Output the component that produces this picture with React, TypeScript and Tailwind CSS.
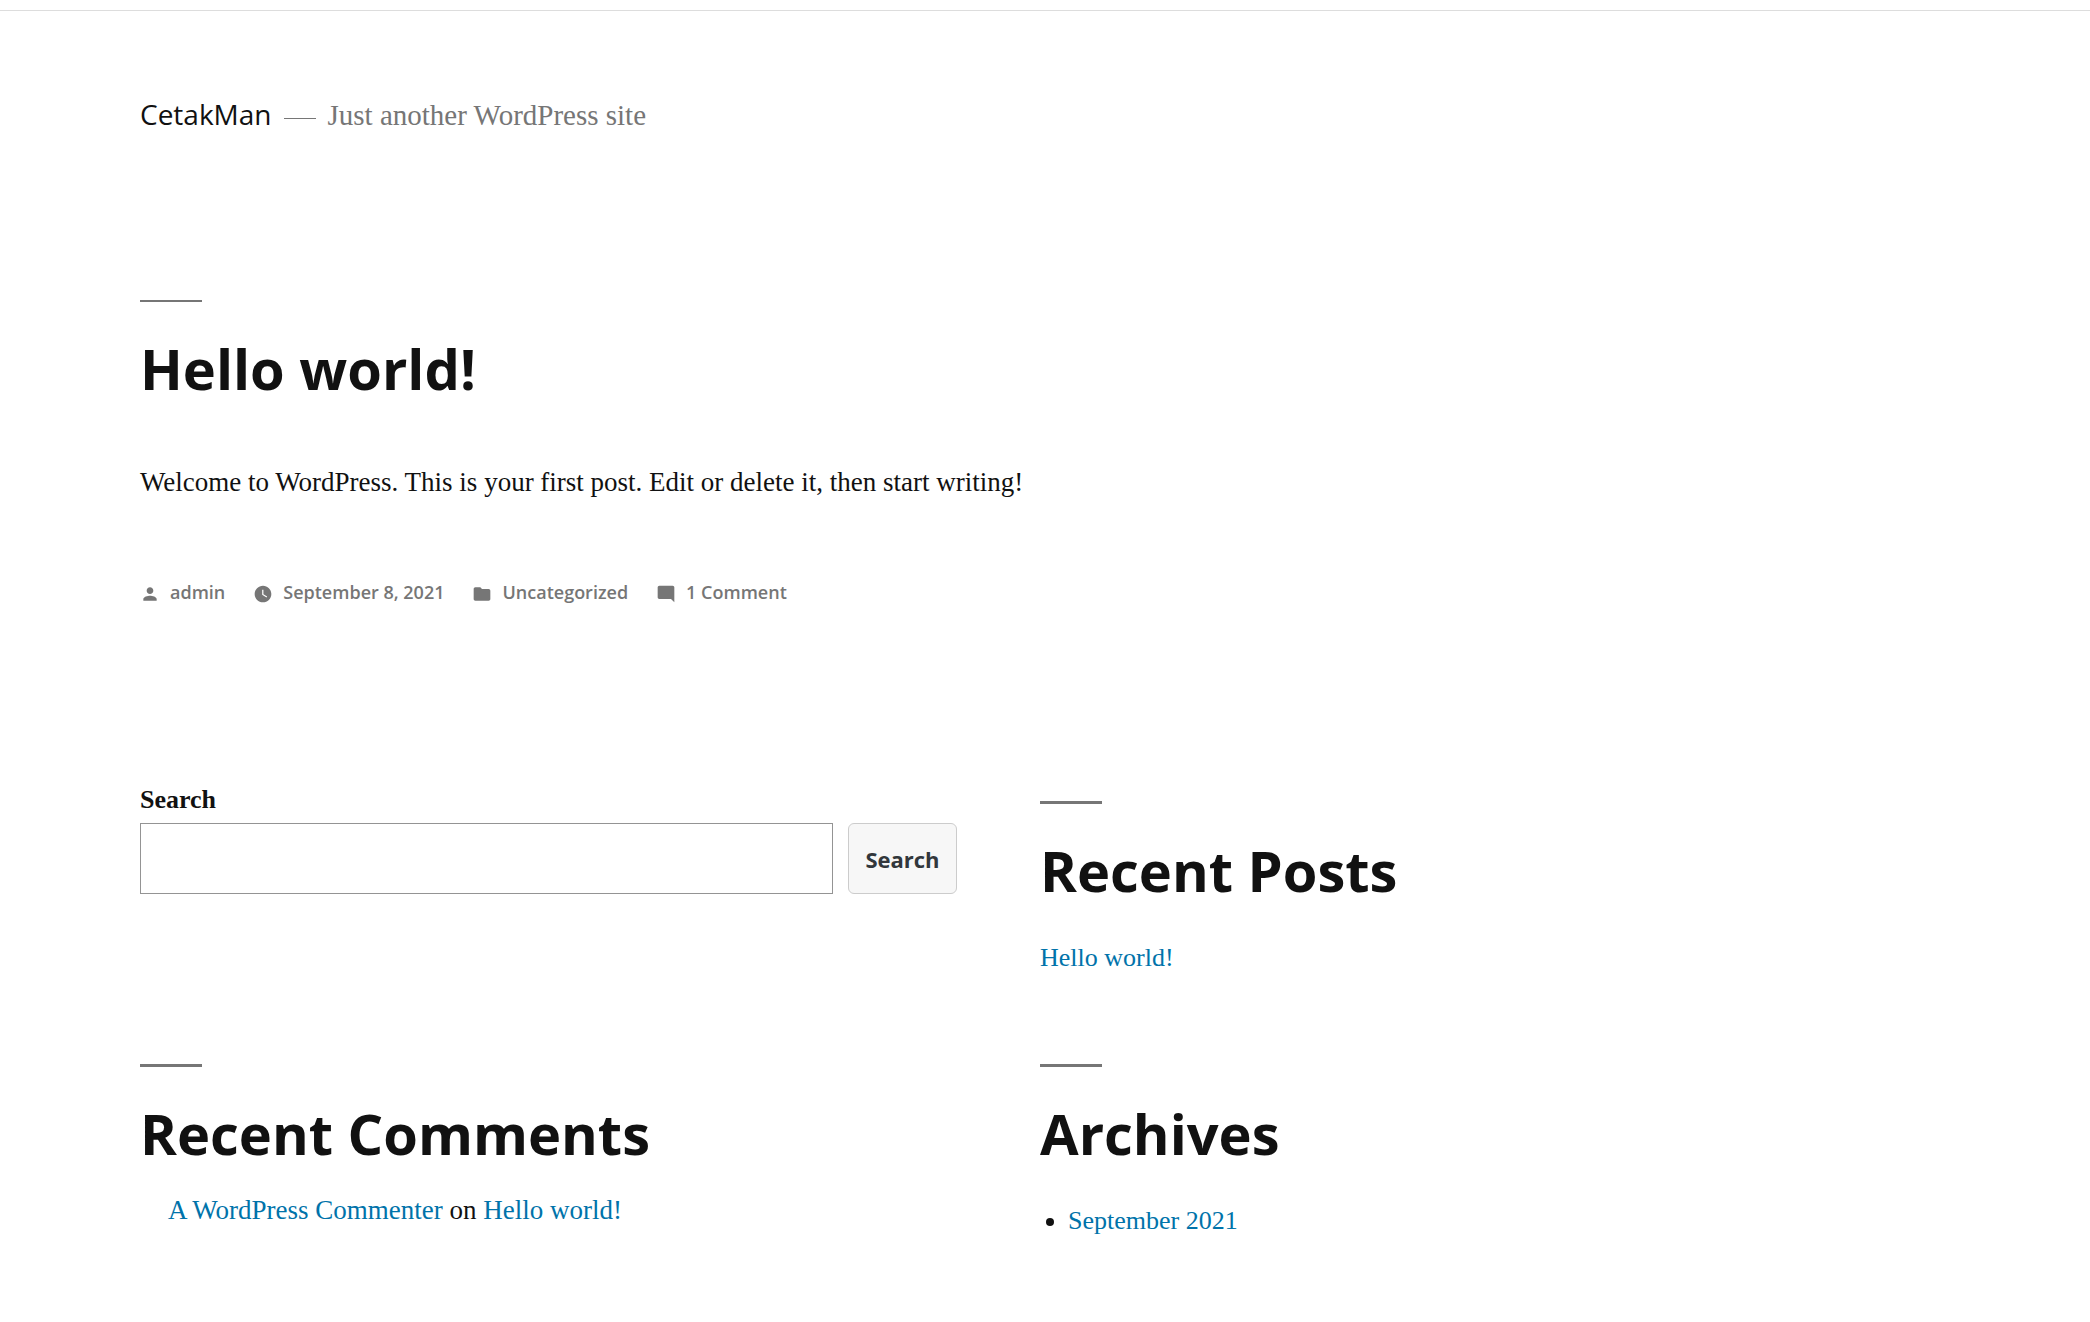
import type { ReactNode } from "react";

const posts = [
  {
    title: "Hello world!",
    body: "Welcome to WordPress. This is your first post. Edit or delete it, then start writing!",
    author: "admin",
    date: "September 8, 2021",
    category: "Uncategorized",
    comments: "1 Comment",
  },
];

const icons = {
  person:
    "M12 12c2.21 0 4-1.79 4-4s-1.79-4-4-4-4 1.79-4 4 1.79 4 4 4zm0 2c-2.67 0-8 1.34-8 4v2h16v-2c0-2.66-5.33-4-8-4z",
  watch:
    "M12 2C6.5 2 2 6.5 2 12s4.5 10 10 10 10-4.5 10-10S17.5 2 12 2zm4.2 14.2L11 13V7h1.5v5.2l4.5 2.7-.8 1.3z",
  folder:
    "M10 4H4c-1.1 0-1.99.9-1.99 2L2 18c0 1.1.9 2 2 2h16c1.1 0 2-.9 2-2V8c0-1.1-.9-2-2-2h-8l-2-2z",
  comment:
    "M21.99 4c0-1.1-.89-2-1.99-2H4c-1.1 0-2 .9-2 2v12c0 1.1.9 2 2 2h14l4 4-.01-18z",
};

function MetaLink({ icon, children }: { icon: keyof typeof icons; children: ReactNode }) {
  return (
    <a href="#" className="flex items-center gap-2.5 hover:text-[#0073aa]">
      <svg viewBox="0 0 24 24" className="mt-1 size-5" fill="currentColor" aria-hidden="true">
        <path d={icons[icon]} />
      </svg>
      {children}
    </a>
  );
}

function WidgetTitle({ children }: { children: ReactNode }) {
  return (
    <>
      <div className="h-[3px] w-[62px] bg-[#767676]" />
      <h2 className="mt-7 font-['Open_Sans',sans-serif] text-[56px] leading-[76px] font-bold">
        {children}
      </h2>
    </>
  );
}

export default function App() {
  return (
    <div className="min-h-screen bg-white font-['Liberation_Serif',serif] text-[26px] leading-[46px] text-[#111]">
      <div className="h-2.5" />
      <div className="border-t border-[#ddd] pr-[233px] pl-[140px]">
        <header className="flex items-baseline pt-20">
          <h1 className="font-['Open_Sans',sans-serif] text-[28px]">
            <a href="#">CetakMan</a>
          </h1>
          <span className="mx-3 mt-2 h-px w-8 self-center bg-[#767676]" aria-hidden="true" />
          <p className="text-[29px] text-[#767676]">Just another WordPress site</p>
        </header>

        <main className="pt-[162px]">
          {posts.map((post) => (
            <article key={post.title}>
              <div className="h-0.5 w-[62px] bg-[#767676]" />
              <h2 className="mt-7 font-['Open_Sans',sans-serif] text-[56px] leading-[76px] font-bold">
                <a href="#">{post.title}</a>
              </h2>
              <p className="mt-[53px] text-[27px]">{post.body}</p>
              <footer className="mt-16 flex flex-wrap gap-x-7 font-['Open_Sans',sans-serif] text-[18px] font-semibold text-[#767676]">
                <MetaLink icon="person">{post.author}</MetaLink>
                <MetaLink icon="watch">{post.date}</MetaLink>
                <MetaLink icon="folder">{post.category}</MetaLink>
                <MetaLink icon="comment">{post.comments}</MetaLink>
              </footer>
            </article>
          ))}
        </main>

        <aside className="mt-[162px] grid grid-cols-2 gap-x-[83px] pb-20">
          <section className="pb-[170px]">
            <form role="search" onSubmit={(e) => e.preventDefault()}>
              <label htmlFor="search" className="block font-bold">
                Search
              </label>
              <div className="flex gap-[15px]">
                <input
                  id="search"
                  type="search"
                  className="h-[71px] min-w-0 flex-1 border border-[#949494] px-3 outline-none"
                />
                <button
                  type="submit"
                  className="h-[71px] w-[109px] rounded-md border border-[#ccc] bg-[#f7f7f7] font-['Open_Sans',sans-serif] text-[22px] font-bold text-[#32373c]"
                >
                  Search
                </button>
              </div>
            </form>
          </section>

          <section className="pt-6">
            <WidgetTitle>Recent Posts</WidgetTitle>
            <ul className="mt-[27px] text-[#0073aa]">
              <li>
                <a href="#">Hello world!</a>
              </li>
            </ul>
          </section>

          <section>
            <WidgetTitle>Recent Comments</WidgetTitle>
            <ol className="mt-4 pl-7 text-[27px]">
              <li>
                <a href="#" className="text-[#0073aa]">A WordPress Commenter</a> on{" "}
                <a href="#" className="text-[#0073aa]">Hello world!</a>
              </li>
            </ol>
          </section>

          <section>
            <WidgetTitle>Archives</WidgetTitle>
            <ul className="mt-[27px] list-disc pl-7">
              <li>
                <a href="#" className="text-[#0073aa]">September 2021</a>
              </li>
            </ul>
          </section>
        </aside>
      </div>
    </div>
  );
}
